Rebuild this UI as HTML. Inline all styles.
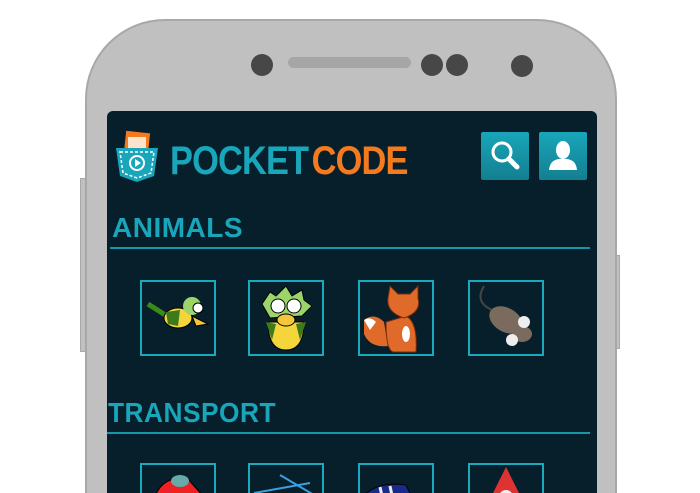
<!DOCTYPE html>
<html style="margin:0;width:700px;height:493px;overflow:hidden"><head><style>
body{margin:0;width:700px;height:493px;background:#fff;position:relative;overflow:hidden;font-family:"Liberation Sans",sans-serif}
.phone{position:absolute;left:85px;top:19px;width:528px;height:472px;background:#c0c0c0;border:2px solid #a8a8a8;border-bottom:none;border-radius:80px 80px 0 0}
.side{position:absolute;background:#c0c0c0;border:1px solid #a8a8a8}
.dot{position:absolute;border-radius:50%;background:#474747}
.screen{position:absolute;left:107px;top:111px;width:490px;height:382px;background:#061f2a;border-radius:6px 6px 0 0}
.t{position:absolute;font-weight:bold;color:#19a5ba;letter-spacing:0.5px;transform-origin:0 0}
.line{position:absolute;height:2px;background:#1795a9}
.th{position:absolute;width:72px;height:72px;border:2px solid #1ba9bd;overflow:hidden}
.th2{height:28px;border-bottom:none}
.btn{position:absolute;top:132px;width:48px;height:48px;background:linear-gradient(#18a6b9,#137f91);border-radius:2px}
</style></head><body>
<div class="side" style="left:80px;top:178px;width:5px;height:172px"></div>
<div class="side" style="left:613px;top:255px;width:5px;height:92px"></div>
<div class="phone"></div>
<div class="dot" style="left:251px;top:54px;width:22px;height:22px"></div>
<div style="position:absolute;left:288px;top:57px;width:123px;height:11px;border-radius:6px;background:#a6a6a6"></div>
<div class="dot" style="left:421px;top:54px;width:22px;height:22px"></div>
<div class="dot" style="left:446px;top:54px;width:22px;height:22px"></div>
<div class="dot" style="left:511px;top:55px;width:22px;height:22px"></div>
<div class="screen"></div>
<svg style="position:absolute;left:114px;top:130px" width="46" height="54" viewBox="0 0 46 54">
<rect x="11" y="2" width="24" height="22" fill="#f47a20" transform="rotate(6 23 13)"/>
<rect x="14" y="7" width="18" height="14" fill="#fde3cc"/>
<path d="M2 18 H44 L40 46 L23 52 L6 46 Z" fill="#19a5ba"/>
<path d="M6 22 H40 L37 43 L23 48 L9 43 Z" fill="none" stroke="#fff" stroke-width="1.5" stroke-dasharray="3 2"/>
<circle cx="23" cy="33" r="8" fill="#fff"/><circle cx="23" cy="33" r="6" fill="#19a5ba"/>
<path d="M21 29 L27 33 L21 37 Z" fill="#fff"/>
</svg>
<div class="t" style="left:170px;top:139px;font-size:40px;letter-spacing:-1px;transform:scaleX(0.86)">POCKET<span style="color:#f47a20;margin-left:4px">CODE</span></div>
<div class="btn" style="left:481px"><svg width="48" height="48"><circle cx="21" cy="20" r="9" fill="none" stroke="#fff" stroke-width="3"/><path d="M28 27 L36 35" stroke="#fff" stroke-width="5" stroke-linecap="round"/></svg></div>
<div class="btn" style="left:539px"><svg width="48" height="48"><ellipse cx="24" cy="18" rx="7" ry="9" fill="#fff"/><path d="M10 38 Q11 28 20 27 L28 27 Q37 28 38 38 Z" fill="#fff"/></svg></div>
<div class="t" style="left:112px;top:212px;font-size:28px">ANIMALS</div>
<div class="line" style="left:110px;top:247px;width:480px"></div>
<div class="th" style="left:140px;top:280px"><svg width="72" height="72"><path d="M6 22 L28 36" stroke="#3a8a1a" stroke-width="5"/><ellipse cx="36" cy="36" rx="14" ry="10" fill="#f5d63a" stroke="#000"/><path d="M24 30 L38 28 L36 44 L26 42Z" fill="#3c7a1a"/><circle cx="50" cy="24" r="9" fill="#9cd46a"/><circle cx="56" cy="26" r="5" fill="#fff" stroke="#000"/><path d="M50 34 L66 42 L54 44Z" fill="#f5c63a" stroke="#000"/></svg></div>
<div class="th" style="left:248px;top:280px"><svg width="72" height="72"><path d="M18 40 Q18 68 36 68 Q54 68 54 40Z" fill="#f5d63a" stroke="#000"/><path d="M16 40 L22 58 L26 42Z M56 40 L50 58 L46 42Z" fill="#3c7a1a"/><path d="M12 22 L20 10 L26 14 L36 4 L42 14 L52 8 L54 18 L62 24 L52 34 L20 36Z" fill="#9cd46a" stroke="#000"/><circle cx="28" cy="24" r="7" fill="#fff" stroke="#000"/><circle cx="44" cy="24" r="7" fill="#fff" stroke="#000"/><ellipse cx="36" cy="38" rx="9" ry="6" fill="#f5c63a" stroke="#000"/></svg></div>
<div class="th" style="left:358px;top:280px"><svg width="72" height="72"><path d="M4 38 Q14 30 24 40 L28 64 Q10 66 4 52Z" fill="#e06a2a"/><path d="M4 38 Q10 34 16 40 L10 48Z" fill="#fff"/><path d="M26 40 Q26 70 34 70 L56 70 Q58 40 46 34Z" fill="#e06a2a" stroke="#7a2a0a"/><path d="M28 16 L30 4 L38 12 L50 12 L58 4 L58 16 Q62 30 44 36 Q26 30 28 16Z" fill="#e06a2a" stroke="#7a2a0a"/><ellipse cx="46" cy="52" rx="4" ry="8" fill="#fff"/></svg></div>
<div class="th" style="left:468px;top:280px"><svg width="72" height="72"><path d="M14 4 Q4 20 22 28" stroke="#444" fill="none" stroke-width="2"/><ellipse cx="36" cy="38" rx="18" ry="12" fill="#7b6b5e" transform="rotate(30 36 38)"/><ellipse cx="52" cy="52" rx="10" ry="8" fill="#7b6b5e"/><circle cx="54" cy="40" r="6" fill="#eee"/><circle cx="42" cy="58" r="6" fill="#eee"/></svg></div>
<div class="t" style="left:108px;top:397px;font-size:28px;transform:scaleX(0.94)">TRANSPORT</div>
<div class="line" style="left:107px;top:432px;width:483px"></div>
<div class="th th2" style="left:140px;top:463px"><svg width="72" height="28"><path d="M12 34 Q20 10 46 14 L60 30 L60 40 L12 40Z" fill="#e22" stroke="#000"/><ellipse cx="38" cy="16" rx="9" ry="6" fill="#6aa"/></svg></div>
<div class="th th2" style="left:248px;top:463px"><svg width="72" height="28"><path d="M4 28 L60 18 M30 10 L64 30" stroke="#3aa0e0" stroke-width="2"/></svg></div>
<div class="th th2" style="left:358px;top:463px"><svg width="72" height="28"><path d="M4 30 Q20 16 46 20 L56 40 L4 40Z" fill="#1a2a8a" stroke="#000"/><path d="M20 22 L24 40 M30 21 L34 40" stroke="#eee" stroke-width="3"/></svg></div>
<div class="th th2" style="left:468px;top:463px"><svg width="72" height="28"><path d="M36 2 L50 30 L50 40 L22 40 L22 30Z" fill="#d33"/><circle cx="36" cy="32" r="7" fill="#eee"/></svg></div>
</body></html>
